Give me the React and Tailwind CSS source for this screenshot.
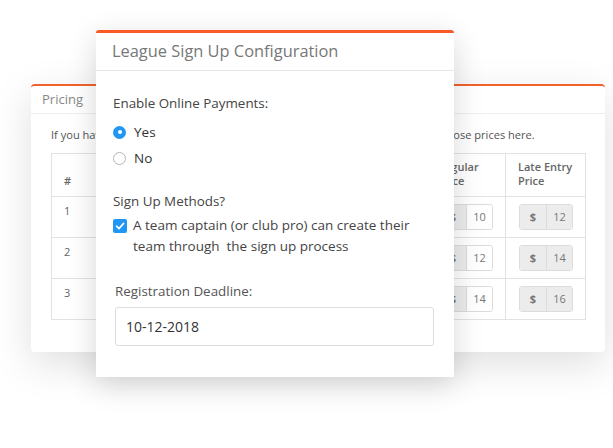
import React from "react";

// rows for the pricing table behind the modal
const rows = [
  { id: 1, regular: 10, late: 12 },
  { id: 2, regular: 12, late: 14 },
  { id: 3, regular: 14, late: 16 },
];

const PriceInput = ({ value, disabled }) => (
  <div className="flex h-[26px] w-[54px] rounded-[3px] border border-[#dcdcdc] overflow-hidden">
    <div className="w-[26px] bg-[#ececec] flex items-center justify-center text-[11px] font-bold text-[#777]">
      $
    </div>
    <div
      className={
        disabled
          ? "flex-1 border-l border-[#dcdcdc] bg-[#ececec] flex items-center justify-center text-[11px] text-[#777]"
          : "flex-1 border-l border-[#dcdcdc] bg-white flex items-center justify-center text-[11px] text-[#777]"
      }
    >
      {value}
    </div>
  </div>
);

const PricingCard = () => (
  <div className="ml-[31px] mt-[83px] w-[574px] h-[268px] bg-white border-t-2 border-[#f0622d] rounded-[4px] shadow-[0_12px_40px_rgba(0,0,0,0.13)]">
    <div className="h-[28px] px-[11px] flex items-center border-b border-[#eeeeee] text-[13px] text-[#888]">
      Pricing
    </div>
    <div className="px-[20px] pt-[13px]">
      <p className="text-[11.07px] leading-[16px] text-[#555] mb-[10px] whitespace-nowrap">
        If you have different prices for early, regular or late registration, you can set those prices here.
      </p>
      <table className="w-[534px] table-fixed border-collapse text-[11px] text-[#666]">
        <colgroup>
          <col className="w-[60px]" />
          <col className="w-[160px]" />
          <col className="w-[154px]" />
          <col className="w-[80px]" />
          <col className="w-[80px]" />
        </colgroup>
        <thead>
          <tr className="h-[43px]">
            <th className="border border-[#e2e2e2] align-bottom text-left font-semibold px-[12px] pb-[8px] leading-[14px]">#</th>
            <th className="border border-[#e2e2e2]"></th>
            <th className="border border-[#e2e2e2]"></th>
            <th className="border border-[#e2e2e2] align-bottom text-left font-semibold px-[12px] pb-[8px] leading-[14px]">Regular Price</th>
            <th className="border border-[#e2e2e2] align-bottom text-left font-semibold px-[12px] pb-[8px] leading-[14px]">Late Entry Price</th>
          </tr>
        </thead>
        <tbody>
          {rows.map((row) => (
            <tr key={row.id} className="h-[41px]">
              <td className="border border-[#e2e2e2] align-top px-[12px] pt-[6px]">{row.id}</td>
              <td className="border border-[#e2e2e2]"></td>
              <td className="border border-[#e2e2e2]"></td>
              <td className="border border-[#e2e2e2] align-top pl-[13px] pt-[7px]">
                <PriceInput value={row.regular} />
              </td>
              <td className="border border-[#e2e2e2] align-top pl-[13px] pt-[7px]">
                <PriceInput value={row.late} disabled />
              </td>
            </tr>
          ))}
        </tbody>
      </table>
    </div>
  </div>
);

const Radio = ({ checked, label }) => (
  <label className="h-[26px] flex items-center gap-[8px] text-[13.5px] text-[#333]">
    {checked ? (
      <span className="w-[13px] h-[13px] rounded-full bg-[#2196f3] flex items-center justify-center">
        <span className="w-[4px] h-[4px] rounded-full bg-white" />
      </span>
    ) : (
      <span className="w-[13px] h-[13px] rounded-full border border-[#b5b5b5] bg-white" />
    )}
    {label}
  </label>
);

const ConfigModal = () => (
  <div className="absolute left-[96px] top-[30px] w-[358px] h-[347px] bg-white border-t-[3px] border-[#fb5a27] rounded-t-[3px] shadow-[0_8px_30px_rgba(0,0,0,0.16)]">
    <div className="h-[38px] px-[16px] flex items-center border-b border-[#e6e6e6] text-[16.4px] text-[#777]">
      League Sign Up Configuration
    </div>
    <div className="px-[17px] pt-[22px]">
      <div className="text-[13.4px] leading-[20px] text-[#444]">Enable Online Payments:</div>
      <div className="mt-[6px]">
        <Radio checked label="Yes" />
        <Radio label="No" />
      </div>
      <div className="mt-[20px] text-[13.4px] leading-[20px] text-[#444]">Sign Up Methods?</div>
      <div className="mt-[4px] flex gap-[6px]">
        <span className="mt-[4px] w-[14px] h-[14px] shrink-0 rounded-[2px] bg-[#2196f3] flex items-center justify-center">
          <svg width="10" height="10" viewBox="0 0 10 10" fill="none">
            <path d="M1.5 5.2 L4 7.6 L8.6 2.4" stroke="white" strokeWidth="1.6" strokeLinecap="round" strokeLinejoin="round" />
          </svg>
        </span>
        <span className="text-[13.5px] leading-[21px] text-[#444]">
          A team captain (or club pro) can create their
          <br />
          team through&nbsp; the sign up process
        </span>
      </div>
      <div className="pl-[2px]">
        <div className="mt-[24px] text-[13.4px] leading-[20px] text-[#555]">Registration Deadline:</div>
        <div className="mt-[6px] w-[319px] h-[39px] border border-[#dddddd] rounded-[3px] px-[10px] flex items-center text-[14px] text-[#333]">
          10-12-2018
        </div>
      </div>
    </div>
  </div>
);

const App = () => {
  return (
    <div className="relative w-[613px] h-[448px] bg-white overflow-hidden font-['Open_Sans',sans-serif]">
      <div className="pt-px">
        <PricingCard />
      </div>
      <ConfigModal />
    </div>
  );
};

export default App;
